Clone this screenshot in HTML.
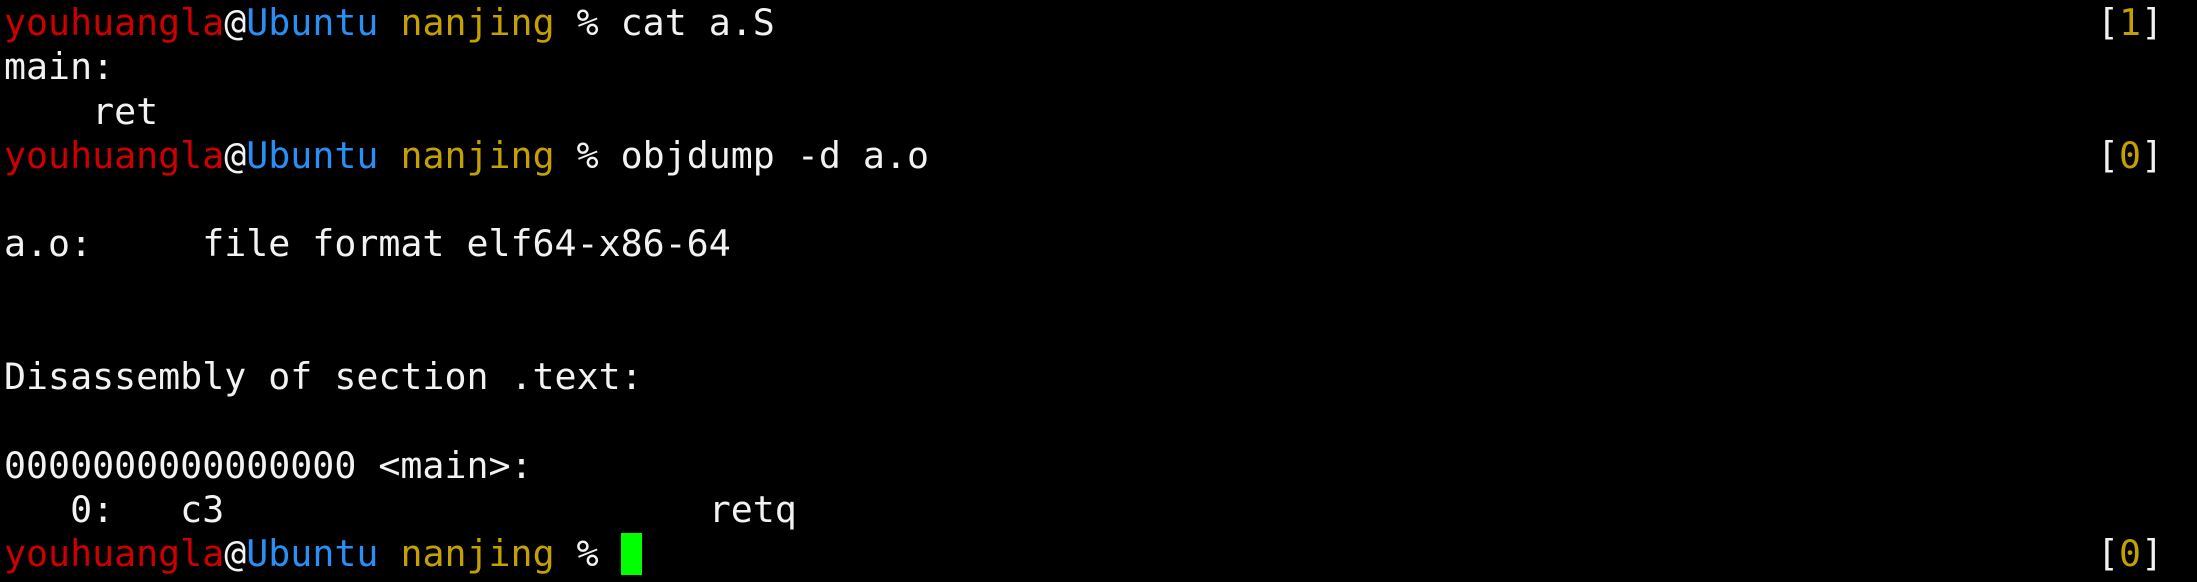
<!DOCTYPE html>
<html><head><meta charset="utf-8"><style>
html,body{margin:0;padding:0;background:#000;width:2197px;height:582px;overflow:hidden}
pre{position:absolute;left:4px;top:1px;margin:0;font-family:"DejaVu Sans Mono","Liberation Mono",monospace;font-size:36.6px;line-height:44.25px;color:#f2f2f2;white-space:pre}
.r{color:#cc0000}.b{color:#2a8ff5}.y{color:#c4a000}
.cur{display:inline-block;width:21px;height:42px;background:#00ff00;vertical-align:-9px}
.rt{position:absolute;left:2097px;font-family:"DejaVu Sans Mono","Liberation Mono",monospace;font-size:36.6px;line-height:44.25px;color:#f2f2f2;white-space:pre}
</style></head><body>
<pre><span class="r">youhuangla</span>@<span class="b">Ubuntu</span> <span class="y">nanjing</span> % cat a.S
main:
    ret
<span class="r">youhuangla</span>@<span class="b">Ubuntu</span> <span class="y">nanjing</span> % objdump -d a.o

a.o:     file format elf64-x86-64


Disassembly of section .text:

0000000000000000 &lt;main&gt;:
   0:   c3                      retq
<span class="r">youhuangla</span>@<span class="b">Ubuntu</span> <span class="y">nanjing</span> % <span class="cur"></span></pre>
<div class="rt" style="top:1px">[<span class="y">1</span>]</div>
<div class="rt" style="top:133.75px">[<span class="y">0</span>]</div>
<div class="rt" style="top:532px">[<span class="y">0</span>]</div>
</body></html>
